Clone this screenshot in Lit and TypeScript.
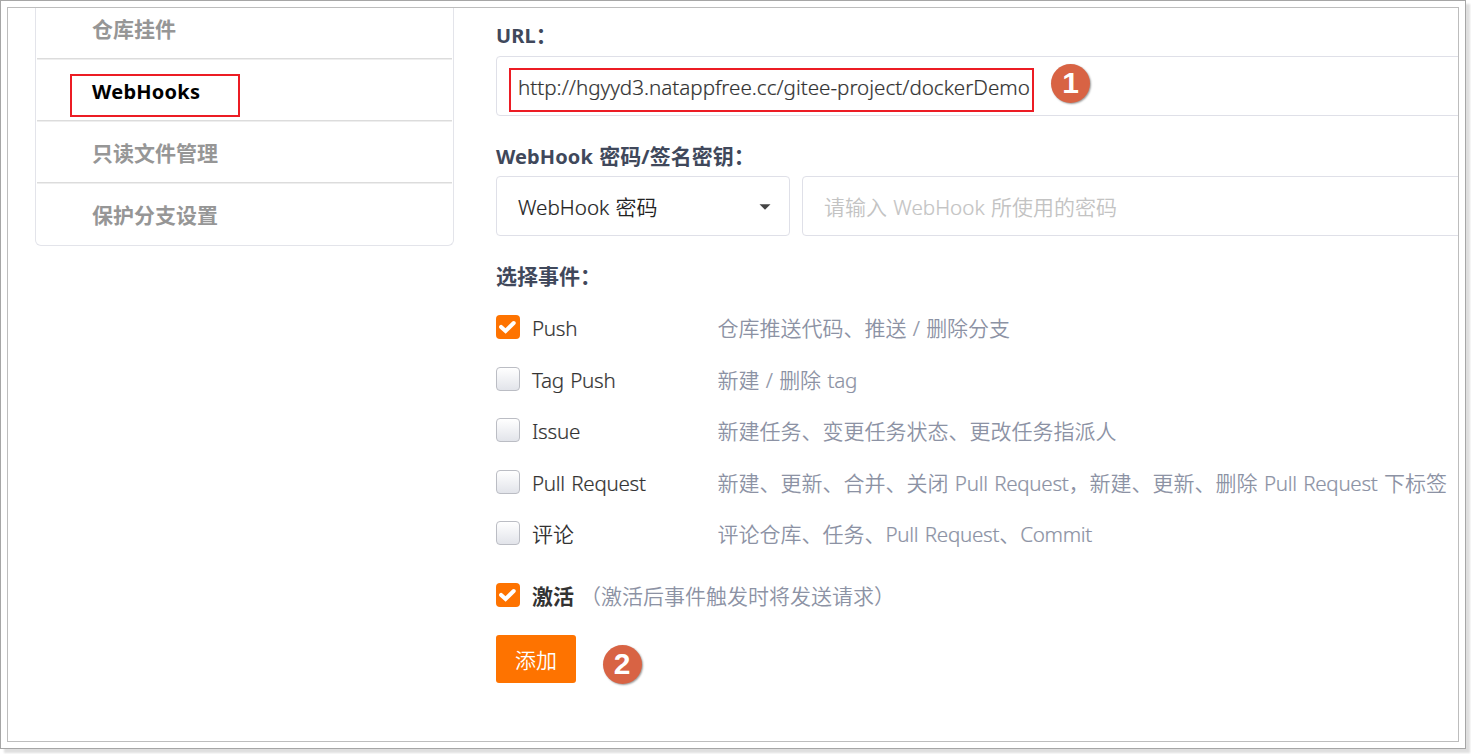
import { LitElement, html, css, svg } from "lit";
import { customElement, property } from "lit/decorators.js";
import { classMap } from "lit/directives/class-map.js";

/* Latin runs are set in their own face and size next to the Chinese glyphs. */
const mixed = (text: string) =>
  text
    .split(/([\x20-\x7e]+)/)
    .filter((part) => part)
    .map((part) => (/^[\x20-\x7e]+$/.test(part) ? html`<span class="latin">${part}</span>` : part));

const latinStyles = css`
  .latin {
    font-family: "Noto Sans", "Open Sans", sans-serif;
    font-size: var(--latin-size, 20.6px);
    line-height: 1;
    white-space: pre;
    letter-spacing: var(--track, 0px);
    word-spacing: var(--gap, 1px);
    -webkit-text-stroke: var(--stroke, 0.2px);
  }
`;

@customElement("check-box")
class CheckBox extends LitElement {
  @property({ type: Boolean }) checked = false;

  static styles = css`
    :host {
      display: block;
      flex: none;
      width: 24px;
      height: 24px;
    }
    .box {
      box-sizing: border-box;
      width: 24px;
      height: 24px;
      border: 1px solid #bbbdc4;
      border-radius: 4px;
      background: linear-gradient(#ffffff, #e2e4ea);
    }
    .on {
      border: 0;
      background: #fe7300;
    }
    .mark {
      display: block;
    }
  `;

  render() {
    return html`<div class=${classMap({ box: true, on: this.checked })}>
      ${this.checked
        ? html`<svg class="mark" width="24" height="24" viewBox="0 0 24 24">
            ${svg`<path d="M5.1 11.9 L9.6 16 L17.7 8" fill="none" stroke="#fff" stroke-width="4" stroke-linecap="round" />`}
          </svg>`
        : null}
    </div>`;
  }
}

@customElement("step-badge")
class StepBadge extends LitElement {
  static styles = css`
    :host {
      display: flex;
      align-items: center;
      justify-content: center;
      width: 39px;
      height: 39px;
      border-radius: 50%;
      background: #d86344;
      box-shadow: 1px 1px 2px rgba(0, 0, 0, 0.4);
      color: #fff;
      font: bold 30px/38px "Liberation Sans", Arial, sans-serif;
    }
  `;

  render() {
    return html`<slot></slot>`;
  }
}

const menu = [
  { label: "仓库挂件" },
  { label: "WebHooks", active: true },
  { label: "只读文件管理" },
  { label: "保护分支设置" },
];

const events = [
  { name: "Push", note: "仓库推送代码、推送 / 删除分支", on: true },
  { name: "Tag Push", note: "新建 / 删除 tag" },
  { name: "Issue", note: "新建任务、变更任务状态、更改任务指派人" },
  { name: "Pull Request", note: "新建、更新、合并、关闭 Pull Request，新建、更新、删除 Pull Request 下标签" },
  { name: "评论", note: "评论仓库、任务、Pull Request、Commit" },
];

@customElement("app-root")
class AppRoot extends LitElement {
  static styles = [
    latinStyles,
    css`
      :host {
        display: block;
        height: 754px;
        overflow: hidden;
        background: #fff;
        font: 350 21px/30px "Noto Sans CJK SC", sans-serif;
        color: #333;
      }
      .frame {
        box-sizing: border-box;
        width: 1466px;
        height: 749px;
        padding: 6px;
        border: 1px solid #a6a6a6;
        background: #fff;
        box-shadow: 4px 4px 2px #dfdfdf;
      }
      .page {
        box-sizing: border-box;
        display: flex;
        align-items: flex-start;
        width: 1452px;
        height: 735px;
        border: 1px solid #bdbdbd;
        overflow: hidden;
        white-space: nowrap;
      }
      .menu {
        box-sizing: border-box;
        flex: none;
        width: 419px;
        height: 238px;
        margin-left: 27px;
        padding: 0 1px;
        border: 1px solid #e3e4ea;
        border-top: 0;
        border-radius: 0 0 6px 6px;
        font-weight: bold;
        color: #969696;
        --latin-size: 20px;
        --stroke: 0;
      }
      .item {
        position: relative;
        box-sizing: border-box;
        height: 62px;
        padding: 16px 0 0 55px;
        border-bottom: 1px solid #dcdcdc;
        box-shadow: 0 1px 0 #eee;
      }
      .item:first-child {
        height: 51px;
        padding-top: 5px;
      }
      .item:last-child {
        border: 0;
        box-shadow: none;
      }
      .active {
        color: #000;
        --track: 0.25px;
      }
      .outline {
        position: absolute;
        box-sizing: border-box;
        border: 2px solid #ec1c24;
      }
      .outline-menu {
        left: 33px;
        top: 15px;
        width: 170px;
        height: 43px;
      }
      .outline-url {
        left: 12px;
        top: 11px;
        width: 525px;
        height: 44px;
      }
      .form {
        flex: none;
        width: 1100px;
        margin-left: 42px;
        padding-top: 11px;
      }
      .label {
        height: 30px;
        font-weight: bold;
        color: #40485b;
        --latin-size: 20px;
        --track: 0.1px;
        --stroke: 0;
      }
      .field {
        position: relative;
        box-sizing: border-box;
        display: flex;
        align-items: center;
        height: 60px;
        padding: 0 21px 1px;
        border: 1px solid #dfe0e8;
        border-radius: 4px;
      }
      .url {
        margin: 7px 0 24px;
        padding: 3px 21px 0;
      }
      .secret {
        display: flex;
        gap: 12px;
        margin: 6px 0 24px;
      }
      .kind {
        width: 294px;
        justify-content: space-between;
        padding-right: 18px;
        color: #222;
      }
      .arrow {
        margin-top: 2px;
      }
      .password {
        flex: 1;
        color: #c3c3c3;
      }
      .badge-url {
        position: absolute;
        left: 554px;
        top: 6.5px;
      }
      .event {
        display: flex;
        align-items: flex-start;
        height: 51.5px;
      }
      .events {
        padding-top: 25px;
        --track: -0.28px;
        --gap: 1.3px;
      }
      .name {
        width: 185.5px;
        margin: -3px 0 0 12px;
        flex: none;
      }
      .note {
        margin-top: -3px;
        color: #8c92a4;
      }
      .enable {
        display: flex;
        margin-top: 10.5px;
      }
      .enable-name {
        margin: -3px 6px 0 12px;
        font-weight: bold;
      }
      .actions {
        display: flex;
        margin-top: 25px;
      }
      .submit {
        box-sizing: border-box;
        width: 80px;
        height: 48px;
        padding: 0;
        border: 0;
        border-radius: 3px;
        background: #fe7300;
        color: #fff;
        font: 350 21px/48px "Noto Sans CJK SC", sans-serif;
      }
      .badge-submit {
        margin: 9.5px 0 0 26.5px;
      }
    `,
  ];

  render() {
    return html`
      <div class="frame">
        <div class="page">
          <nav class="menu">
            ${menu.map(
              (m) => html`<div class=${classMap({ item: true, active: !!m.active })}>
                ${mixed(m.label)}${m.active ? html`<span class="outline outline-menu"></span>` : null}
              </div>`
            )}
          </nav>
          <main class="form">
            <div class="label">${mixed("URL：")}</div>
            <div class="field url">
              ${mixed("http://hgyyd3.natappfree.cc/gitee-project/dockerDemo")}
              <span class="outline outline-url"></span>
              <step-badge class="badge-url">1</step-badge>
            </div>
            <div class="label">${mixed("WebHook 密码/签名密钥：")}</div>
            <div class="secret">
              <div class="field kind">
                <span>${mixed("WebHook 密码")}</span>
                <svg class="arrow" width="12" height="6" viewBox="0 0 12 6"><path d="M0.5 0.3H11.5L6 5.8Z" fill="#444" /></svg>
              </div>
              <div class="field password"><span>${mixed("请输入 WebHook 所使用的密码")}</span></div>
            </div>
            <div class="label">${mixed("选择事件：")}</div>
            <div class="events">
              ${events.map(
                (e) => html`<div class="event">
                  <check-box ?checked=${!!e.on}></check-box>
                  <div class="name">${mixed(e.name)}</div>
                  <div class="note">${mixed(e.note)}</div>
                </div>`
              )}
            </div>
            <div class="enable">
              <check-box checked></check-box>
              <div class="enable-name">激活</div>
              <div class="note">（激活后事件触发时将发送请求）</div>
            </div>
            <div class="actions">
              <button class="submit">添加</button>
              <step-badge class="badge-submit">2</step-badge>
            </div>
          </main>
        </div>
      </div>
    `;
  }
}
